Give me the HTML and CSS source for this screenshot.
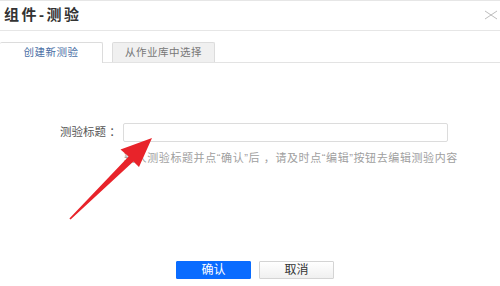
FILE: index.html
```html
<!DOCTYPE html>
<html lang="zh-CN">
<head>
<meta charset="utf-8">
<title>组件-测验</title>
<link rel="stylesheet" href="styles.css">
</head>
<body>
<div class="dialog">
  <div class="header">
    <h1 class="title">组件-测验</h1>
    <span class="close" aria-label="关闭">
      <svg width="14" height="10" viewBox="0 0 14 10"><path d="M1 1 L13 9 M13 1 L1 9" stroke="#bdbdbd" stroke-width="1" fill="none"/></svg>
    </span>
  </div>
  <div class="tabs">
    <div class="tab active">创建新测验</div>
    <div class="tab">从作业库中选择</div>
  </div>
  <div class="content">
    <div class="row">
      <label class="label">测验标题 ：</label>
      <input class="input" type="text">
    </div>
    <p class="hint">输入测验标题并点“确认”后 ，请及时点“编辑”按钮去编辑测验内容</p>
  </div>
  <div class="actions">
    <button class="btn primary">确认</button>
    <button class="btn">取消</button>
  </div>
  <svg class="arrow" width="500" height="286" viewBox="0 0 500 286">
    <polygon fill="#e8232a" points="69.4,217.6 128.6,155.6 120.5,148.5 152,137 139,166 133.4,160.4 70.6,218.4"/>
  </svg>
</div>
</body>
</html>
```

FILE: styles.css
```css
html, body {
  margin: 0;
  padding: 0;
  background: #fff;
}
body {
  font-family: "Liberation Sans", "Noto Sans CJK SC", sans-serif;
  color: #333;
}
.dialog {
  position: relative;
  width: 500px;
  height: 286px;
  box-sizing: border-box;
  border-top: 1px solid #e6e6e6;
  display: flex;
  flex-direction: column;
  overflow: hidden;
}
.header {
  height: 30px;
  box-sizing: border-box;
  border-bottom: 1px solid #e6e6e6;
  display: flex;
  align-items: center;
  justify-content: space-between;
  padding: 0 2px 0 4px;
}
.title {
  margin: 0;
  font-size: 15px;
  letter-spacing: 2.5px;
  font-weight: bold;
  color: #333;
  line-height: 20px;
  transform: translateY(-1px);
}
.close {
  display: flex;
  width: 14px;
  height: 10px;
  transform: translateY(-1px);
}
.tabs {
  margin-top: 11px;
  height: 20px;
  display: flex;
  border-bottom: 1px solid #e3e3e3;
}
.tab {
  box-sizing: border-box;
  height: 20px;
  width: 103px;
  border: 1px solid #dcdcdc;
  border-bottom: none;
  border-radius: 2px 2px 0 0;
  background: #f0f0f0;
  color: #777;
  font-size: 10.5px;
  letter-spacing: 0.5px;
  line-height: 19px;
  text-align: center;
  margin-left: 9px;
}
.tab.active {
  margin-left: 0;
  width: 103px;
  height: 21px;
  border-left: none;
  background: #fff;
  color: #4a6fa5;
  position: relative;
  z-index: 1;
}
.content {
  padding-top: 60px;
}
.row {
  display: flex;
  align-items: center;
  padding-left: 60px;
}
.label {
  width: 63px;
  font-size: 11.5px;
  color: #555;
  line-height: 19px;
}
.input {
  box-sizing: border-box;
  width: 325px;
  height: 19px;
  margin: 0;
  border: 1px solid #dcdcdc;
  border-radius: 2px;
  padding: 0 4px;
  outline: none;
}
.hint {
  margin: 9px 0 0 124px;
  font-size: 11px;
  letter-spacing: 0.6px;
  line-height: 14px;
  color: #a0a0a0;
  white-space: nowrap;
}
.actions {
  margin-top: auto;
  padding: 0 0 7px 176px;
  display: flex;
  gap: 8px;
}
.btn {
  box-sizing: border-box;
  width: 75px;
  height: 18px;
  margin: 0;
  padding: 0;
  border: 1px solid #d4d4d4;
  border-radius: 1px;
  background: linear-gradient(#ffffff, #f0f0f0);
  color: #333;
  font-family: "Liberation Sans", "Noto Sans CJK SC", sans-serif;
  font-size: 12px;
  line-height: 16px;
}
.btn.primary {
  background: #0a6cff;
  border-color: #0a6cff;
  color: #fff;
}
.arrow {
  position: absolute;
  left: 0;
  top: 0;
  pointer-events: none;
  z-index: 2;
}
```
